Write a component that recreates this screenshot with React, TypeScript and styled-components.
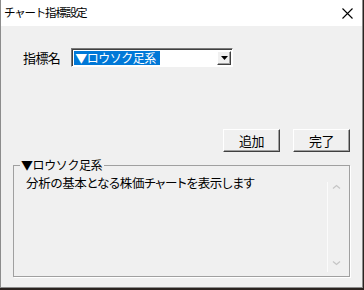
import React from 'react';
import styled, { createGlobalStyle } from 'styled-components';

const GlobalStyle = createGlobalStyle`
    html, body {
        margin: 0;
        padding: 0;
        background: #2a2320;
    }
    body {
        font-family: "Noto Sans CJK JP", "Noto Sans", sans-serif;
        font-size: 12px;
        color: #000;
    }
`;

const Window = styled.div`
    width: 361px;
    height: 287px;
    display: flex;
    flex-direction: column;
    background: #f0f0f0;
    border: 1px solid #8c8c8c;
    border-top: none;
    box-sizing: content-box;
`;

const TitleBar = styled.div`
    height: 26px;
    flex: none;
    display: flex;
    align-items: center;
    justify-content: space-between;
    background: #ffffff;
    padding: 0 9px 0 3px;
`;

const TitleText = styled.span`
    font-size: 11.5px;
    letter-spacing: -1.2px;
    line-height: 1;
    margin-top: -1px;
`;

const Client = styled.div`
    flex: 1;
    display: flex;
    flex-direction: column;
    padding: 22px 11px 0 11px;
`;

const FieldRow = styled.div`
    display: flex;
    align-items: center;
    gap: 11px;
    padding-left: 11px;
`;

const Label = styled.span`
    font-size: 13px;
    letter-spacing: -0.6px;
    line-height: 1;
`;

const Combo = styled.div`
    width: 162px;
    height: 19px;
    box-sizing: border-box;
    display: flex;
    align-items: stretch;
    background: #fff;
    border: 1px solid;
    border-color: #7a7a7a #fff #fff #7a7a7a;
    box-shadow: inset 1px 1px 0 #404040;
    padding: 2px 1px 1px 2px;
`;

const ComboValue = styled.div`
    flex: 1;
    display: flex;
    align-items: center;
`;

const Selected = styled.span`
    background: #0078d7;
    color: #fff;
    font-size: 12px;
    letter-spacing: -0.5px;
    line-height: 14px;
    padding: 0 4px 0 1px;
`;

const DropButton = styled.div`
    width: 14px;
    box-sizing: border-box;
    background: #f0f0f0;
    border: 1px solid;
    border-color: #fff #404040 #404040 #fff;
    box-shadow: inset -1px -1px 0 #a0a0a0;
    display: flex;
    align-items: center;
    justify-content: center;
`;

const ButtonRow = styled.div`
    display: flex;
    justify-content: flex-end;
    gap: 13px;
    margin-top: 62px;
    padding-right: 1px;
`;

const Button = styled.button`
    flex: none;
    width: 57px;
    height: 23px;
    margin: 0;
    box-sizing: border-box;
    background: #f0f0f0;
    border: 1px solid;
    border-color: #fff #404040 #404040 #fff;
    box-shadow: inset -1px -1px 0 #a0a0a0;
    font-family: "Noto Sans CJK JP", "Noto Sans", sans-serif;
    font-size: 13px;
    letter-spacing: -0.5px;
    color: #000;
    padding: 0;
    line-height: 1;
`;

const Group = styled.fieldset`
    margin: 6px 1px 0 1px;
    height: 119px;
    box-sizing: border-box;
    border: 1px solid #a0a0a0;
    box-shadow: 1px 1px 0 #ffffff;
    padding: 2px 5px 4px 12px;
    min-width: 0;
`;

const Legend = styled.legend`
    font-size: 12px;
    letter-spacing: -0.4px;
    line-height: 14px;
    padding: 0 2px 0 1px;
    margin-left: -6px;
`;

const Memo = styled.div`
    display: flex;
    height: 98px;
`;

const MemoText = styled.div`
    flex: 1;
    font-size: 12.5px;
    font-feature-settings: "palt";
    letter-spacing: -0.3px;
    line-height: 14px;
    padding-top: 2px;
`;

const ScrollBar = styled.div`
    width: 16px;
    margin-top: 8px;
    border-left: 1px solid #fbfbfb;
    display: flex;
    flex-direction: column;
    justify-content: space-between;
    align-items: center;
    padding: 2px 0 6px 0;
`;

const Arrow: React.FC<{ down?: boolean }> = ({ down }) => (
    <svg width="9" height="6" viewBox="0 0 9 6">
        <path
            d={down ? 'M1 1.5 L4.5 4.5 L8 1.5' : 'M1 4.5 L4.5 1.5 L8 4.5'}
            fill="none"
            stroke="#c6c6c6"
            strokeWidth="1.3"
        />
    </svg>
);

const App: React.FC = () => {
    return (
        <>
            <GlobalStyle />
            <Window>
                <TitleBar>
                    <TitleText>チャート指標設定</TitleText>
                    <svg width="11" height="11" viewBox="0 0 11 11">
                        <path d="M0.5 0.5 L10.5 10.5 M10.5 0.5 L0.5 10.5" stroke="#000" strokeWidth="1.1" />
                    </svg>
                </TitleBar>
                <Client>
                    <FieldRow>
                        <Label>指標名</Label>
                        <Combo>
                            <ComboValue>
                                <Selected>▼ロウソク足系</Selected>
                            </ComboValue>
                            <DropButton>
                                <svg width="7" height="4" viewBox="0 0 7 4">
                                    <path d="M0 0 H7 L3.5 4 Z" fill="#000" />
                                </svg>
                            </DropButton>
                        </Combo>
                    </FieldRow>
                    <ButtonRow>
                        <Button>追加</Button>
                        <Button>完了</Button>
                    </ButtonRow>
                    <Group>
                        <Legend>▼ロウソク足系</Legend>
                        <Memo>
                            <MemoText>分析の基本となる株価チャートを表示します</MemoText>
                            <ScrollBar>
                                <Arrow />
                                <Arrow down />
                            </ScrollBar>
                        </Memo>
                    </Group>
                </Client>
            </Window>
        </>
    );
};

export default App;
